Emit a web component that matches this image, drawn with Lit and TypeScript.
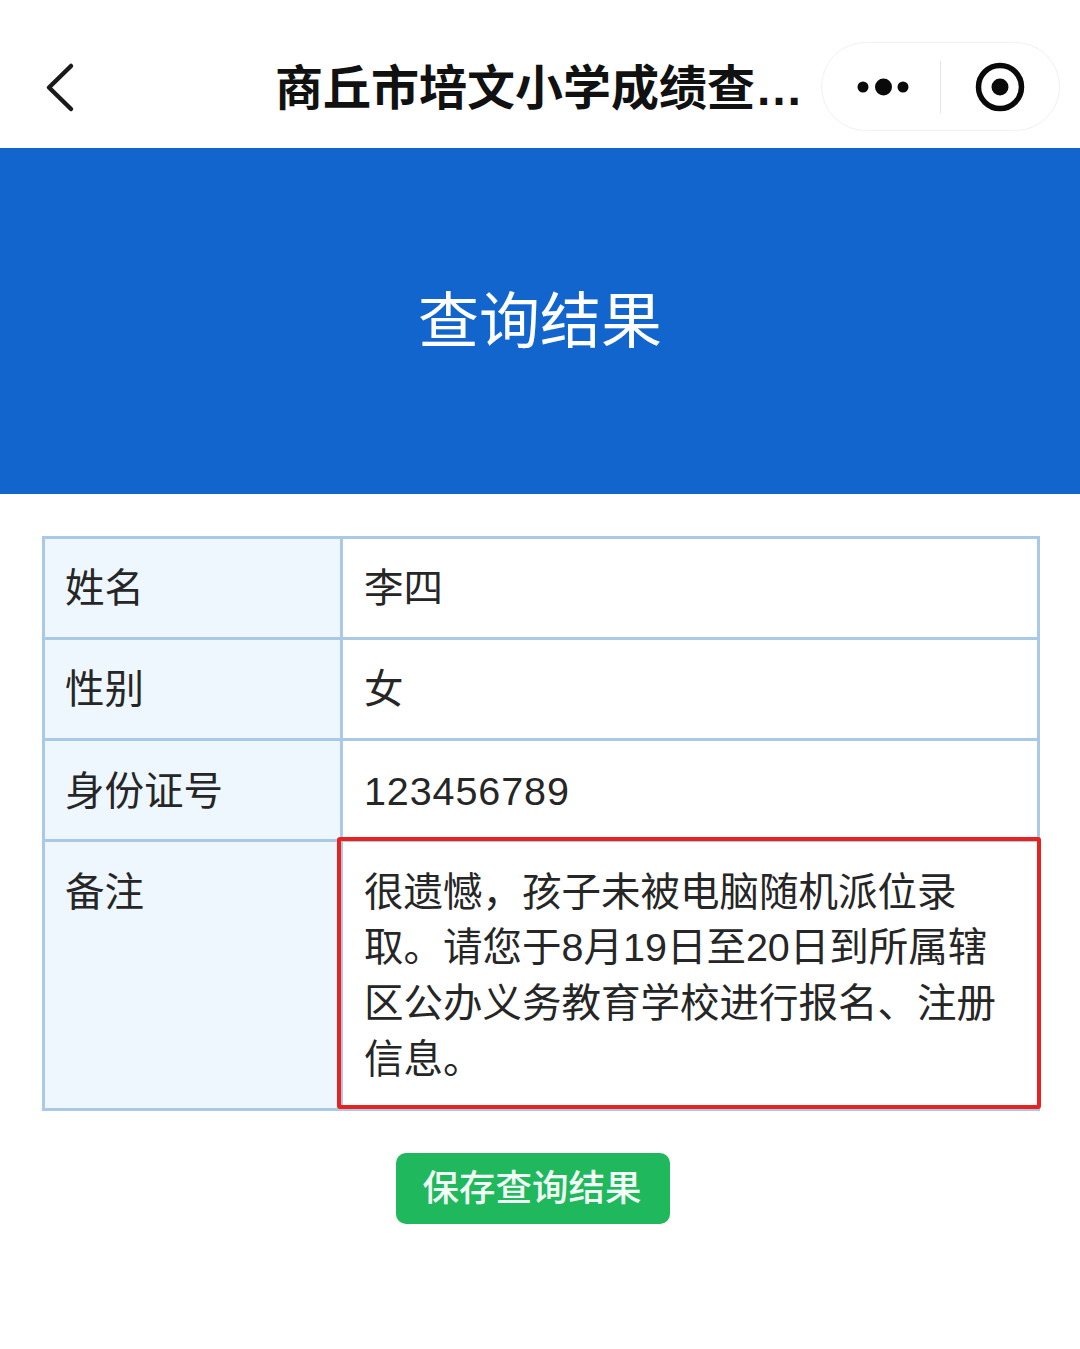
import { LitElement, html, css } from "lit";
import { customElement } from "lit/decorators.js";

@customElement("app-root")
export class AppRoot extends LitElement {
  static styles = css`
    :host {
      display: block;
      min-height: 1349px;
      background: #fff;
      font-family: "Liberation Sans", "Noto Sans CJK SC", sans-serif;
      color: #222;
    }
    .nav {
      height: 148px;
      box-sizing: border-box;
      padding: 42px 20px 17px 0;
      display: flex;
      align-items: center;
    }
    .back {
      width: 275px;
      height: 89px;
      flex: none;
      display: block;
    }
    .title {
      width: 526px;
      flex: none;
      padding-top: 4px;
      font-size: 48px;
      line-height: 60px;
      font-weight: 700;
      color: #111;
      white-space: nowrap;
    }
    .capsule {
      margin-left: 20px;
      flex: 1;
      height: 89px;
      box-sizing: border-box;
      border: 1px solid #f1f1f1;
      border-radius: 45px;
      display: flex;
      align-items: center;
    }
    .capsule svg {
      display: block;
      flex: none;
    }
    .sep {
      width: 1px;
      height: 52px;
      background: #e4e4e4;
      flex: none;
    }
    .banner {
      height: 346px;
      box-sizing: border-box;
      padding-bottom: 10px;
      background: #1265cc;
      color: #fff;
      display: flex;
      align-items: center;
      justify-content: center;
      font-size: 61px;
      font-weight: 400;
    }
    .table {
      margin: 42px 40px 0 42px;
      display: grid;
      grid-template-columns: 298px 1fr;
      border: solid #a9c9e6;
      border-width: 3px 3px 0 3px;
      font-size: 39.5px;
      line-height: 55.8px;
      color: #262626;
    }
    .cell {
      padding: 22.4px 19px 19.9px 20px;
      border-bottom: 3px solid #a9c9e6;
    }
    .label {
      background: #eef7fe;
      border-right: 3px solid #a9c9e6;
    }
    .value {
      position: relative;
      padding-left: 21px;
    }
    .digits {
      letter-spacing: 0.9px;
    }
    .highlight {
      position: absolute;
      left: -6px;
      top: -5.5px;
      right: -4px;
      bottom: -1px;
      border: 4px solid #e8231f;
      border-radius: 3px;
      pointer-events: none;
    }
    .actions {
      display: flex;
      justify-content: center;
      padding: 42px 14px 0 0;
    }
    .save {
      width: 274px;
      height: 71px;
      box-sizing: border-box;
      border: none;
      border-radius: 10px;
      background: #1fb85c;
      color: #f2fff6;
      font: inherit;
      font-size: 36.5px;
      font-weight: 500;
      padding: 0 2px 5px 0;
    }
  `;

  render() {
    return html`
      <div class="nav">
        <svg class="back" viewBox="0 0 275 89">
          <path d="M71 24 L49 45.5 L71 67" fill="none" stroke="#1a1a1a" stroke-width="4.5" stroke-linecap="round" stroke-linejoin="round" />
        </svg>
        <div class="title">商丘市培文小学成绩查…</div>
        <div class="capsule">
          <svg width="118" height="60" viewBox="0 0 118 60">
            <circle cx="41" cy="30" r="5.5" fill="#0a0a0a" />
            <circle cx="61.5" cy="30" r="8.5" fill="#0a0a0a" />
            <circle cx="81" cy="30" r="5.5" fill="#0a0a0a" />
          </svg>
          <div class="sep"></div>
          <svg width="118" height="60" viewBox="0 0 118 60">
            <circle cx="59" cy="30" r="21.5" fill="none" stroke="#0a0a0a" stroke-width="5.5" />
            <circle cx="59" cy="30" r="8.5" fill="#0a0a0a" />
          </svg>
        </div>
      </div>
      <div class="banner">查询结果</div>
      <div class="table">
        <div class="cell label">姓名</div>
        <div class="cell value">李四</div>
        <div class="cell label">性别</div>
        <div class="cell value">女</div>
        <div class="cell label">身份证号</div>
        <div class="cell value digits">123456789</div>
        <div class="cell label">备注</div>
        <div class="cell value">
          很遗憾，孩子未被电脑随机派位录取。请您于8月19日至20日到所属辖区公办义务教育学校进行报名、注册信息。
          <div class="highlight"></div>
        </div>
      </div>
      <div class="actions"><button class="save">保存查询结果</button></div>
    `;
  }
}
